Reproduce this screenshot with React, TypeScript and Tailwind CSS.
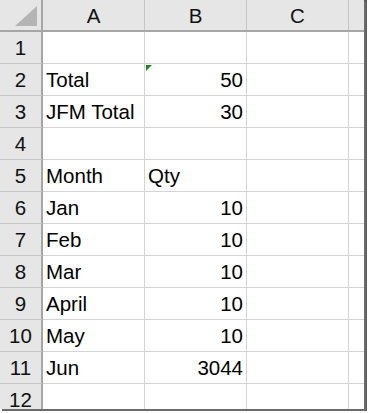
import React from "react";

const COLS = ["A", "B", "C"];

type Row = { a?: string; b?: string; bLeft?: boolean; flag?: boolean };

const ROWS: Row[] = [
  {},
  { a: "Total", b: "50", flag: true },
  { a: "JFM Total", b: "30" },
  {},
  { a: "Month", b: "Qty", bLeft: true },
  { a: "Jan", b: "10" },
  { a: "Feb", b: "10" },
  { a: "Mar", b: "10" },
  { a: "April", b: "10" },
  { a: "May", b: "10" },
  { a: "Jun", b: "3044" },
  {},
];

export default function App() {
  return (
    <div className="w-[369px] h-[413px] bg-white overflow-hidden" style={{ fontFamily: '"Liberation Sans", Arial, sans-serif' }}>
      <div className="w-[367px] h-[411px] pr-[3px] pb-[2px] bg-[linear-gradient(to_right,transparent_364px,#5a5a5a_364px)]">
        <div className="w-[364px] h-[409px] overflow-hidden bg-white text-[20.5px] text-black leading-none shadow-[2px_2px_0_#6b6b6b]">
          {/* header row */}
          <div className="flex h-[32px] bg-[#e6e6e6] border-b-2 border-[#a6a6a6]">
            <div className="w-[43px] shrink-0 border-r-2 border-[#a6a6a6] relative">
              <div className="absolute right-[4px] bottom-[4px] w-0 h-0 border-l-[22px] border-l-transparent border-b-[20px] border-b-[#b4b4b4]" />
            </div>
            {COLS.map((c) => (
              <div key={c} className="w-[102px] shrink-0 border-r border-[#c6c6c6] flex items-center justify-center pt-[2px] text-[#111]">
                {c}
              </div>
            ))}
            <div className="flex-1" />
          </div>
          {ROWS.map((r, i) => (
            <div key={i} className="flex h-[32px]">
              <div className="w-[43px] shrink-0 bg-[#e6e6e6] border-r-2 border-b border-r-[#a6a6a6] border-b-[#c6c6c6] flex items-center justify-center pt-[2px] text-[#111]">
                {i + 1}
              </div>
              <div className="w-[102px] shrink-0 border-r border-b border-[#d4d4d4] flex items-center pl-[3px] pt-[2px]">
                {r.a}
              </div>
              <div className={`w-[102px] shrink-0 border-r border-b border-[#d4d4d4] flex items-center pt-[2px] relative ${r.bLeft ? "justify-start pl-[3px]" : "justify-end pr-[3px]"}`}>
                {r.flag && (
                  <div className="absolute left-[1px] top-[1px] w-0 h-0 border-t-[6px] border-t-[#1e8c1e] border-r-[6px] border-r-transparent" />
                )}
                {r.b}
              </div>
              <div className="w-[102px] shrink-0 border-r border-b border-[#d4d4d4]" />
              <div className="flex-1 border-b border-[#d4d4d4]" />
            </div>
          ))}
        </div>
      </div>
    </div>
  );
}
